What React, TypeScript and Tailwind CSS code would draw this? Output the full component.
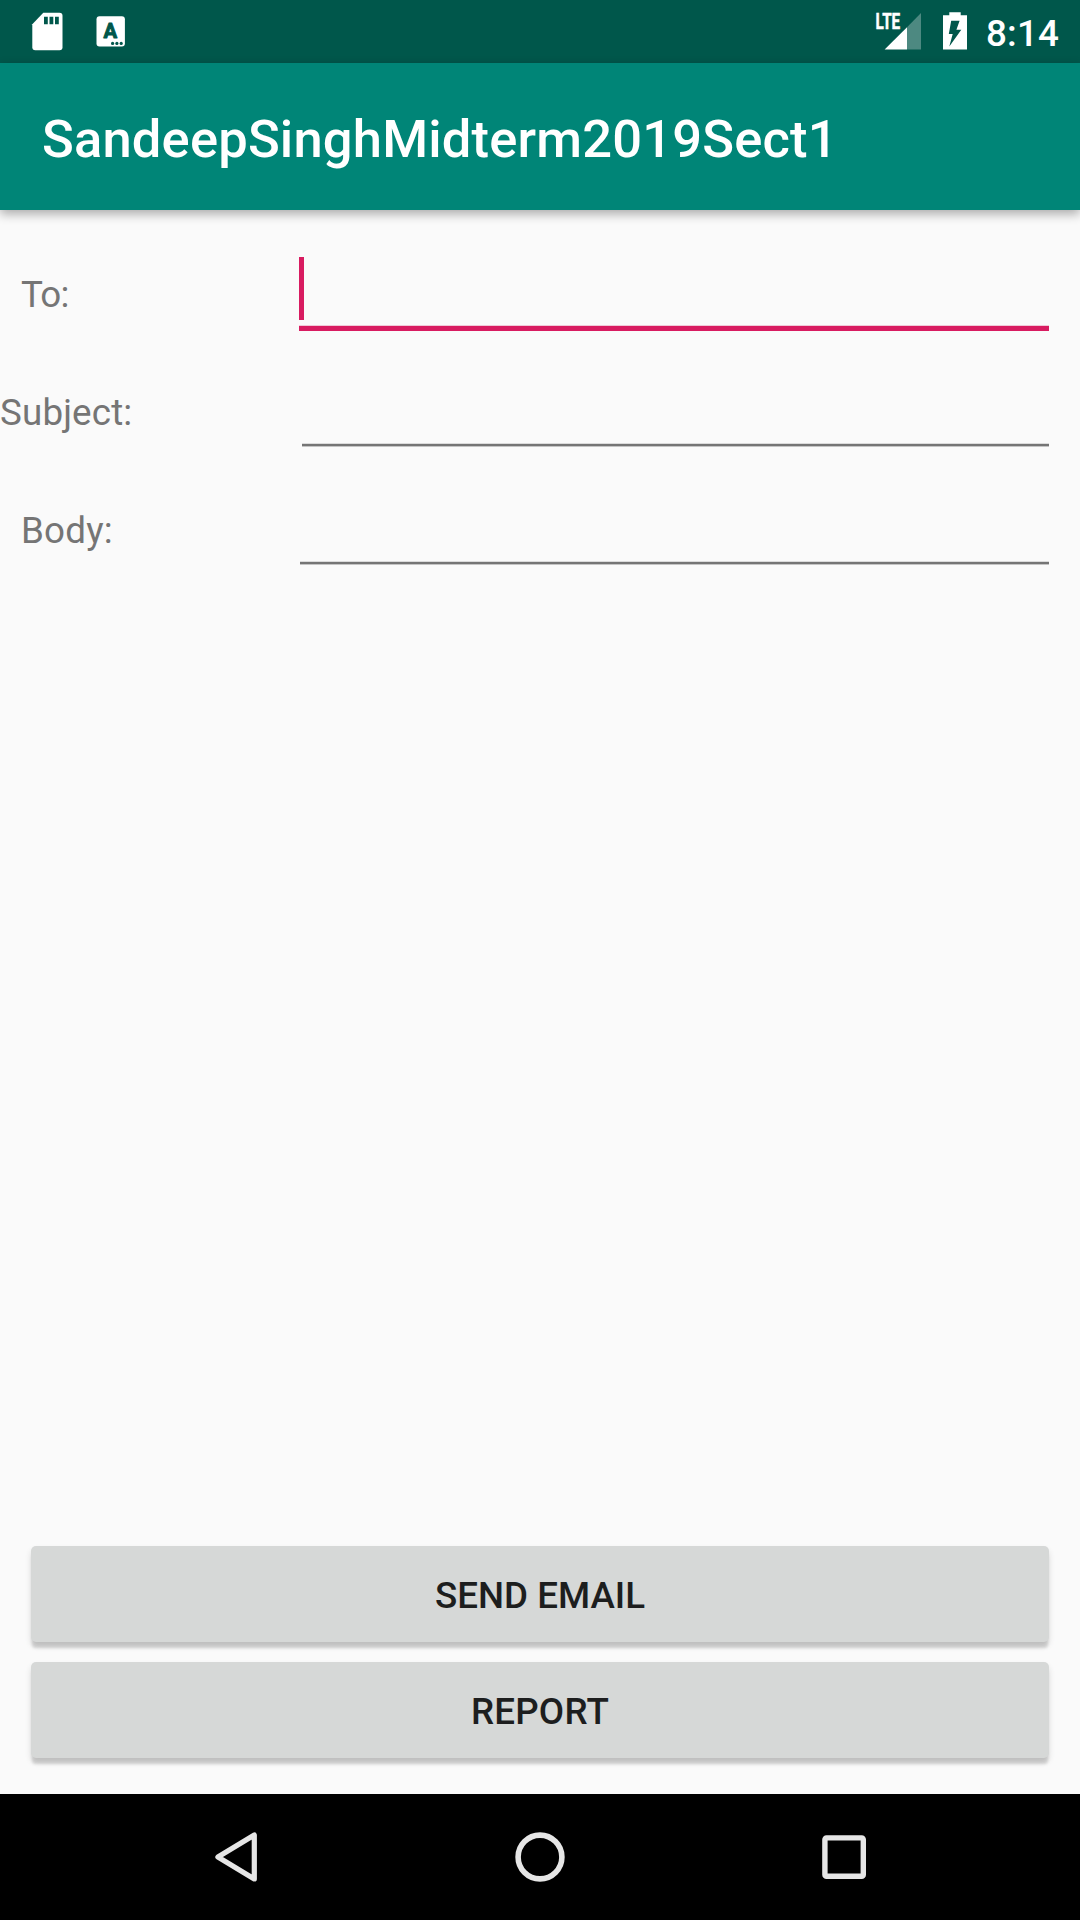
import React from "react";

function StatusBar() {
  return (
    <div className="flex h-[63px] justify-between bg-[#00574b] text-white">
      <svg width="140" height="63" viewBox="0 0 140 63" fill="#fff">
        <path d="M43.3 12.7H59.5a3 3 0 0 1 3 3V47.3a3 3 0 0 1-3 3H35.3a3 3 0 0 1-3-3V24.2Z" />
        <path fill="#00574b" d="M44 16.7h3.8v7.6H44zM49.5 16.7h3.8v7.6h-3.8zM55 16.7h3.8v7.6H55z" />
        <rect x="96.5" y="16.2" width="28.4" height="30.4" rx="3" />
        <text
          x="103.6"
          y="38.2"
          fontSize="20"
          fontWeight="700"
          fill="#00574b"
          stroke="#00574b"
          strokeWidth="0.9"
          strokeLinejoin="round"
          textLength="13.6"
          lengthAdjust="spacingAndGlyphs"
        >
          A
        </text>
        <g fill="#00574b">
          <circle cx="112.6" cy="43.4" r="1.6" />
          <circle cx="116.9" cy="43.4" r="1.6" />
          <circle cx="121.2" cy="43.4" r="1.6" />
        </g>
      </svg>
      <div className="flex pr-[21px]">
        <svg width="110" height="63" viewBox="870 0 110 63" fill="#fff">
          <text
            x="875.6"
            y="28.8"
            fontSize="21.5"
            fontWeight="700"
            stroke="#fff"
            strokeWidth="0.5"
            textLength="24.6"
            lengthAdjust="spacingAndGlyphs"
          >
            LTE
          </text>
          <path fillOpacity=".3" d="M907 27.2 921 13V49.6H907Z" />
          <path d="M884.6 49.6 907 27.2V49.6Z" />
          <path d="M949.3 12.3h11.4v2.9h6.3v34.4H943V15.2h6.3Z" />
          <path fill="#00574b" d="M951.2 20.8h8.4l-3.2 8.9h4.9L949.3 46.4l3.4-12.5h-3.9Z" />
        </svg>
        <div className="mt-[12px] ml-[6px] w-[73px] text-[36.75px] leading-[43px] font-medium tracking-[0.15px] whitespace-nowrap">8:14</div>
      </div>
    </div>
  );
}

function Field({ label, labelClass, children }: {
  label: string;
  labelClass: string;
  children?: React.ReactNode;
}) {
  return (
    <div className="flex h-[118px] items-start pr-[31px]">
      <div className={"shrink-0 pt-[42px] text-[36.75px] leading-[43px] text-[#757575] " + labelClass}>{label}</div>
      <div className="flex flex-1 flex-col">{children}</div>
    </div>
  );
}

function Underline() {
  return (
    <>
      <div className="mt-[94px] h-px bg-[#dbdbdb]" />
      <div className="h-[2px] bg-[#757575]" />
      <div className="h-px bg-[#c4c4c4]" />
    </>
  );
}

function Button({ children }: { children: React.ReactNode }) {
  return (
    <button className="flex h-[96px] items-start justify-center rounded-[5px] bg-[#d6d8d7] pt-[28px] text-[36.75px] leading-[43px] font-medium text-[#1d1e1e] shadow-[0_7px_3px_-1px_rgba(0,0,0,0.14),0_4px_6px_rgba(0,0,0,0.12)]">
      {children}
    </button>
  );
}

export default function App() {
  return (
    <div className="flex h-[1920px] w-[1080px] flex-col overflow-hidden bg-[#fafafa] font-['Roboto',sans-serif]">
      <StatusBar />
      <header className="h-[147px] bg-[#008577] pt-[45px] pl-[42px] text-[52.5px] leading-[62px] font-medium tracking-[0.18px] text-white shadow-[0_4px_10px_rgba(0,0,0,0.32)]">
        SandeepSinghMidterm2019Sect1
      </header>
      <main className="flex flex-1 flex-col pt-[21px]">
        <Field label="To:" labelClass="w-[299px] pl-[21px] tracking-[-0.8px]">
          <div className="mt-[26px] h-[63px] w-[5px] bg-[#d81b60]" />
          <div className="mt-[5px] h-px bg-[#f0c9d7]" />
          <div className="h-[5px] bg-[#d81b60]" />
        </Field>
        <Field label="Subject:" labelClass="w-[302px] tracking-[0.15px]">
          <Underline />
        </Field>
        <Field label="Body:" labelClass="w-[300px] pl-[21px] tracking-[0.2px]">
          <Underline />
        </Field>
        <div className="mt-auto flex flex-col gap-[20px] px-[31px] pb-[36px]">
          <Button>SEND EMAIL</Button>
          <Button>
            <span className="tracking-[0.2px]">REPORT</span>
          </Button>
        </div>
      </main>
      <nav className="flex h-[126px] items-center justify-between bg-black px-[206px]">
        <svg width="60" height="60" viewBox="206 1827 60 60" fill="none" stroke="#e6e6e6" strokeWidth="5.2" strokeLinejoin="round">
          <path d="M254.3 1835V1878.9L217.9 1857Z" />
        </svg>
        <svg width="60" height="60" viewBox="510 1827 60 60" fill="none" stroke="#e6e6e6" strokeWidth="5.6">
          <circle cx="540" cy="1857" r="21.9" />
        </svg>
        <svg width="60" height="60" viewBox="814 1827 60 60" fill="none" stroke="#e6e6e6" strokeWidth="5.4">
          <rect x="824.9" y="1837.9" width="38.4" height="38.4" rx="1.6" />
        </svg>
      </nav>
    </div>
  );
}
